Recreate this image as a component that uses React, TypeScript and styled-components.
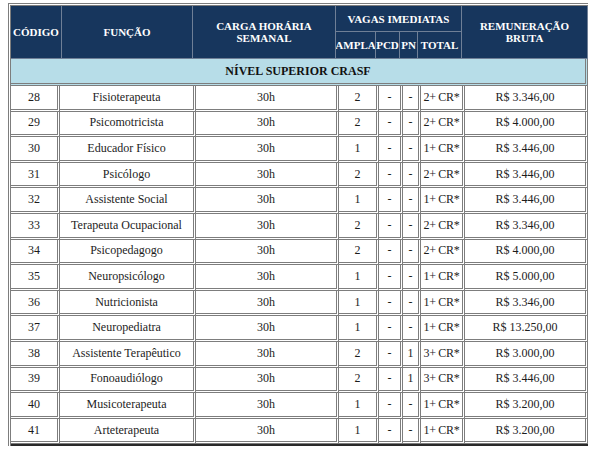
import styled, { createGlobalStyle } from "styled-components"

const GlobalStyle = createGlobalStyle`
    html, body {
        margin: 0;
        padding: 0;
        background: #ffffff;
        font-family: "Liberation Serif", "Times New Roman", serif;
    }
`

interface rowType {
    codigo: number
    funcao: string
    ampla: string
    pcd: string
    pn: string
    total: string
    salario: string
}

const rows: rowType[] = [
    { codigo: 28, funcao: 'Fisioterapeuta', ampla: '2', pcd: '-', pn: '-', total: '2+ CR*', salario: 'R$ 3.346,00' },
    { codigo: 29, funcao: 'Psicomotricista', ampla: '2', pcd: '-', pn: '-', total: '2+ CR*', salario: 'R$ 4.000,00' },
    { codigo: 30, funcao: 'Educador Físico', ampla: '1', pcd: '-', pn: '-', total: '1+ CR*', salario: 'R$ 3.446,00' },
    { codigo: 31, funcao: 'Psicólogo', ampla: '2', pcd: '-', pn: '-', total: '2+ CR*', salario: 'R$ 3.446,00' },
    { codigo: 32, funcao: 'Assistente Social', ampla: '1', pcd: '-', pn: '-', total: '1+ CR*', salario: 'R$ 3.446,00' },
    { codigo: 33, funcao: 'Terapeuta Ocupacional', ampla: '2', pcd: '-', pn: '-', total: '2+ CR*', salario: 'R$ 3.346,00' },
    { codigo: 34, funcao: 'Psicopedagogo', ampla: '2', pcd: '-', pn: '-', total: '2+ CR*', salario: 'R$ 4.000,00' },
    { codigo: 35, funcao: 'Neuropsicólogo', ampla: '1', pcd: '-', pn: '-', total: '1+ CR*', salario: 'R$ 5.000,00' },
    { codigo: 36, funcao: 'Nutricionista', ampla: '1', pcd: '-', pn: '-', total: '1+ CR*', salario: 'R$ 3.346,00' },
    { codigo: 37, funcao: 'Neuropediatra', ampla: '1', pcd: '-', pn: '-', total: '1+ CR*', salario: 'R$ 13.250,00' },
    { codigo: 38, funcao: 'Assistente Terapêutico', ampla: '2', pcd: '-', pn: '1', total: '3+ CR*', salario: 'R$ 3.000,00' },
    { codigo: 39, funcao: 'Fonoaudiólogo', ampla: '2', pcd: '-', pn: '1', total: '3+ CR*', salario: 'R$ 3.446,00' },
    { codigo: 40, funcao: 'Musicoterapeuta', ampla: '1', pcd: '-', pn: '-', total: '1+ CR*', salario: 'R$ 3.200,00' },
    { codigo: 41, funcao: 'Arteterapeuta', ampla: '1', pcd: '-', pn: '-', total: '1+ CR*', salario: 'R$ 3.200,00' },
]

function App() {
    return (
        <Page>
            <GlobalStyle />
            <Table>
                <Header>
                    <HeadCell $rows={2}>CÓDIGO</HeadCell>
                    <HeadCell $rows={2}>FUNÇÃO</HeadCell>
                    <HeadCell $rows={2}>CARGA HORÁRIA<br />SEMANAL</HeadCell>
                    <HeadCell $cols={4}>VAGAS IMEDIATAS</HeadCell>
                    <HeadCell $rows={2} $col={8}>REMUNERAÇÃO<br />BRUTA</HeadCell>
                    <HeadCell $col={4}>AMPLA</HeadCell>
                    <HeadCell>PCD</HeadCell>
                    <HeadCell>PN</HeadCell>
                    <HeadCell>TOTAL</HeadCell>
                </Header>
                <Section>NÍVEL SUPERIOR CRASF</Section>
                {rows.map((r, i) => (
                    <Row key={r.codigo} $last={i === rows.length - 1}>
                        <Cell>{r.codigo}</Cell>
                        <Cell>{r.funcao}</Cell>
                        <Cell>30h</Cell>
                        <Cell>{r.ampla}</Cell>
                        <Cell>{r.pcd}</Cell>
                        <Cell>{r.pn}</Cell>
                        <Cell $tight>{r.total}</Cell>
                        <Cell>{r.salario}</Cell>
                    </Row>
                ))}
            </Table>
        </Page>
    )
}

export default App

const Page = styled.div`
    padding: 3px 0 0 8px;
    width: 600px;
    height: 452px;
    box-sizing: border-box;
`
const Table = styled.div`
    width: 580px;
    border-left: 3px double #7d7d7d;
    border-top: 3px double #7d7d7d;
    box-sizing: border-box;
`
const Header = styled.div`
    display: grid;
    grid-template-columns: 51px 131px 143px 40px 24px 18px 44px 126px;
    grid-template-rows: 26px 27px;
    background-color: #17365d;
`
const HeadCell = styled.div<{ $rows?: number; $cols?: number; $col?: number }>`
    grid-row: span ${p => p.$rows || 1};
    grid-column: ${p => (p.$col ? `${p.$col} / ` : '')}span ${p => p.$cols || 1};
    display: flex;
    align-items: center;
    justify-content: center;
    text-align: center;
    color: #ffffff;
    font-weight: bold;
    font-size: 11px;
    line-height: 12px;
    white-space: nowrap;
    overflow: hidden;
    border-right: 1px solid #6f7f96;
    border-bottom: 1px solid #6f7f96;
    box-sizing: border-box;
`
const Section = styled.div`
    height: 27px;
    display: flex;
    align-items: center;
    justify-content: center;
    background-color: #b7dde8;
    color: #111111;
    font-weight: bold;
    font-size: 12px;
    border-right: 3px double #7d7d7d;
    border-bottom: 3px double #7d7d7d;
    box-sizing: border-box;
`
const Row = styled.div<{ $last?: boolean }>`
    display: grid;
    grid-template-columns: 49px 136px 143px 40px 24px 18px 44px 123px;
    height: 25.6px;
    border-bottom: ${p => (p.$last ? '2px solid #2a2a2a' : 'none')};
    box-sizing: content-box;
`
const Cell = styled.div<{ $tight?: boolean }>`
    display: flex;
    align-items: center;
    justify-content: center;
    font-size: 12px;
    color: #1c1c1c;
    white-space: nowrap;
    overflow: hidden;
    letter-spacing: ${p => (p.$tight ? '-0.3px' : '0')};
    border-right: 3px double #7d7d7d;
    border-bottom: 3px double #7d7d7d;
    box-sizing: border-box;
`
